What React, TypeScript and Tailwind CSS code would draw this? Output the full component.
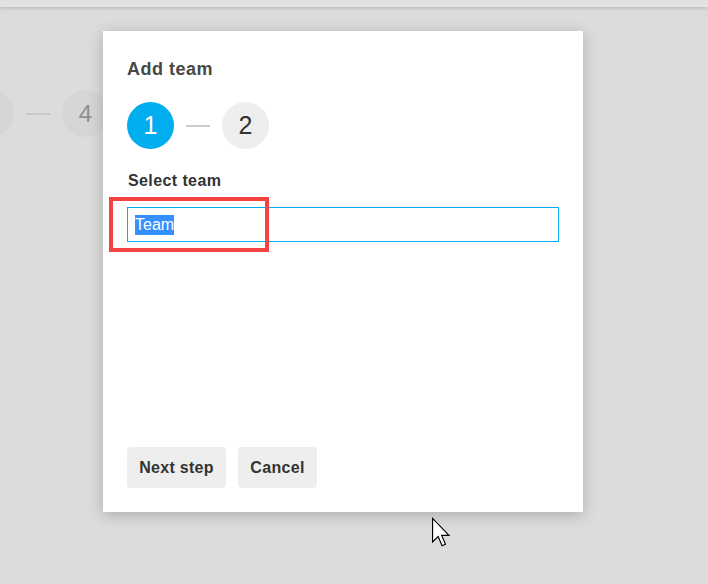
import React from 'react';

const font = { fontFamily: '"Liberation Sans", Arial, sans-serif' };

const Cursor: React.FC = () => (
  <svg className="absolute left-[431px] top-[517px]" width="20" height="30" viewBox="0 0 13.5 20.5">
    <path
      d="M1 1 L1 17 L4.8 13.4 L7.5 19.6 L9.8 18.6 L7.2 12.6 L12.2 12.6 Z"
      fill="#fff"
      stroke="#000"
      strokeWidth={0.8}
      strokeLinejoin="miter"
    />
  </svg>
);

const App: React.FC = () => {
  return (
    <div className="relative w-full h-[584px] overflow-hidden bg-[#dcdcdc]" style={font}>
      {/* top bar */}
      <div className="h-[7px] bg-[#e2e2e2] shadow-[0_1px_4px_rgba(0,0,0,0.18)]" />

      {/* stepper of the page behind the dialog */}
      <div className="flex items-center gap-3 mt-[83px] -ml-[33px]">
        <div className="w-[47px] h-[47px] rounded-full bg-[#d6d6d6]" />
        <div className="w-6 h-[2px] bg-[#c9c9c9]" />
        <div className="w-[47px] h-[47px] rounded-full bg-[#d6d6d6] flex items-center justify-center text-[24px] text-[#8f8f8f]">
          4
        </div>
      </div>

      {/* dialog */}
      <div className="absolute left-[103px] top-[31px] w-[480px] h-[481px] bg-white shadow-[0_3px_14px_rgba(0,0,0,0.22)] flex flex-col px-6 pt-[26px] pb-6">
        <h2 className="text-[18px] leading-6 font-bold text-[#484848] tracking-[0.5px]">Add team</h2>

        <div className="flex items-center gap-3 mt-[21px]">
          <div className="w-[47px] h-[47px] rounded-full bg-[#00aeef] flex items-center justify-center text-[25px] text-white">
            1
          </div>
          <div className="w-6 h-[2px] bg-[#cccccc]" />
          <div className="w-[47px] h-[47px] rounded-full bg-[#eeeeee] flex items-center justify-center text-[25px] text-[#333]">
            2
          </div>
        </div>

        <label className="mt-[22px] ml-px text-[16px] leading-5 font-bold text-[#333] tracking-[0.4px]">Select team</label>

        <div className="mt-[16px] h-[35px] border border-[#00aeef] flex items-center pl-[7px] text-[16px] leading-5">
          <span className="bg-[#3390ff] text-white">Team</span>
        </div>

        <div className="mt-auto flex gap-3">
          <button className="h-[41px] w-[99px] rounded bg-[#eeeeee] text-[16px] font-bold text-[#333] tracking-[0.3px]">
            Next step
          </button>
          <button className="h-[41px] w-[79px] rounded bg-[#eeeeee] text-[16px] font-bold text-[#333] tracking-[0.3px]">
            Cancel
          </button>
        </div>

        {/* annotation box */}
        <div className="absolute left-[6px] top-[166px] w-[160px] h-[55px] border-4 border-[#f44343]" />
      </div>

      <Cursor />
    </div>
  );
};

export default App;
